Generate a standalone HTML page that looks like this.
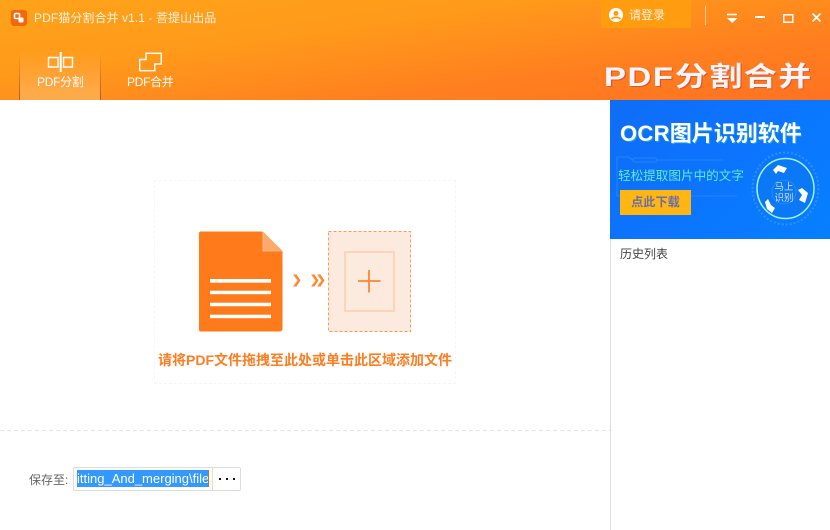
<!DOCTYPE html>
<html><head><meta charset="utf-8"><style>
*{margin:0;padding:0;box-sizing:border-box}
html,body{width:830px;height:530px;overflow:hidden;background:#fff}
body{position:relative;font-family:"Liberation Sans","Noto Sans CJK SC",sans-serif}
.a{position:absolute;white-space:nowrap}
svg{position:absolute;display:block}
</style></head><body>
<div class="a" style="left:0;top:0;width:830px;height:100px;background:linear-gradient(172deg,#ffa31a 0%,#ff9a1a 35%,#ff7f1f 70%,#ff7220 100%)"></div>
<div class="a" style="left:20px;top:50px;width:80px;height:50px;background:linear-gradient(180deg,rgba(255,176,70,0),#ffaa48 85%)"></div>
<div class="a" style="left:19px;top:55px;width:1px;height:45px;background:linear-gradient(180deg,rgba(150,70,50,0),rgba(150,70,50,.7))"></div>
<div class="a" style="left:100px;top:55px;width:1px;height:45px;background:linear-gradient(180deg,rgba(150,70,50,0),rgba(150,70,50,.7))"></div>

<div class="a" style="left:11px;top:10px;width:16px;height:16px;background:#f5660f;border-radius:3px"></div>
<svg style="left:11px;top:10px" width="16" height="16"><rect x="3.500" y="3.500" width="5" height="5" rx="1" fill="none" stroke="#fff" stroke-width="1.600"/><rect x="7.500" y="7.500" width="5" height="5" rx="1" fill="#fff"/></svg>
<div class="a" style="left:34px;top:10px;font-size:12px;line-height:16px;color:#fff3e0;letter-spacing:.08px">PDF猫分割合并 v1.1 - 菩提山出品</div>

<svg style="left:47px;top:51px" width="27" height="22"><path d="M1.500 6.500h9.500v9.500H1.500zM16.500 6.500h9v9.500h-9z" fill="none" stroke="#fff" stroke-width="1.400"/><path d="M13.700 1v20" stroke="#fff" stroke-width="2"/></svg>
<div class="a" style="left:37px;top:74px;font-size:12px;line-height:16px;color:#fff;letter-spacing:-.3px">PDF分割</div>
<svg style="left:139px;top:52px" width="24" height="20"><path d="M.700 7.500H7V1.300H22.300V12H15.700V18.700H.700z" fill="none" stroke="#fff" stroke-width="1.400"/></svg>
<div class="a" style="left:127px;top:74px;font-size:12px;line-height:16px;color:#fff;letter-spacing:-.3px">PDF合并</div>

<div class="a" style="left:601px;top:0;width:90px;height:28px;background:#ff9c10"></div>
<svg style="left:609px;top:8px" width="14" height="14"><circle cx="7" cy="7" r="7" fill="#fff"/><circle cx="7" cy="5.400" r="2.500" fill="#ff9c10"/><path d="M2.700 11.200c1-2.400 7.600-2.400 8.600 0" fill="none" stroke="#ff9c10" stroke-width="1.700"/></svg>
<div class="a" style="left:629px;top:7px;font-size:12px;line-height:16px;color:#fff3e0">请登录</div>
<div class="a" style="left:705px;top:6px;width:1px;height:19px;background:rgba(255,255,255,.55)"></div>
<svg style="left:725px;top:0" width="105" height="30"><path d="M2 14.500h10" stroke="#fff" stroke-width="1.500"/><path d="M2 18h10.500l-5.250 5z" fill="#fff"/><path d="M30 17h10" stroke="#fff" stroke-width="2"/><rect x="58.750" y="14.750" width="9" height="7.500" fill="none" stroke="#fff" stroke-width="1.500"/><path d="M87.500 13.500l8 8M95.500 13.500l-8 8" stroke="#fff" stroke-width="1.700"/></svg>

<div class="a" style="left:604px;top:59px;font-size:27px;line-height:36px;font-weight:bold;color:#f6f6fb;letter-spacing:1.300px;text-shadow:1px 1px 0 #e8542a;transform:scaleX(1.22);transform-origin:left center">PDF分割合并</div>

<!-- Drop zone -->
<div class="a" style="left:154px;top:180px;width:302px;height:204px;border:1px dashed #f9f5f5"></div>
<svg style="left:199px;top:231px" width="84" height="101"><path d="M2 .500H63L83.500 20V98a2.500 2.500 0 0 1-2.500 2.500H2A2 2 0 0 1 0 98.500V2.500A2 2 0 0 1 2 .500z" fill="#ff7a1a"/><path d="M64 .500V20H83.500z" fill="#ffaa6b"/><path d="M64 .500V20H83.500" fill="none" stroke="#ffc69c" stroke-width=".800"/><g fill="#fff"><rect x="11" y="48" width="61" height="3.700"/><rect x="11" y="59.700" width="61" height="3.500"/><rect x="11" y="71.700" width="61" height="3.500"/><rect x="11" y="83.700" width="61" height="3.500"/></g></svg>
<svg style="left:292px;top:272px" width="34" height="18"><path d="M1 2.500l4.500 6-4.500 6h3.500l4-6-4-6z" fill="#ff8a35"/><path d="M19 2.500l4.500 6-4.500 6h3.500l4-6-4-6zM25 2.500l4.500 6-4.500 6h3.500l4-6-4-6z" fill="#ff8a35"/></svg>
<svg style="left:328px;top:231px" width="83" height="101"><rect x=".500" y=".500" width="82" height="100" fill="#fdeadf" stroke="#ff9a55" stroke-dasharray="3 2"/></svg>
<div class="a" style="left:344px;top:251px;width:51px;height:61px;border:2px solid #fdd4b8"></div>
<svg style="left:358px;top:270px" width="23" height="23"><path d="M0 11h22.500M11 0v22.500" stroke="#ff8436" stroke-width="1.800"/></svg>
<div class="a" style="left:158px;top:351px;font-size:14px;line-height:18px;font-weight:bold;color:#ff7d20">请将PDF文件拖拽至此处或单击此区域添加文件</div>

<div class="a" style="left:0;top:430px;width:610px;height:1px;background:repeating-linear-gradient(90deg,#e4e4e4 0 4px,transparent 4px 7px)"></div>
<div class="a" style="left:29px;top:472px;font-size:12px;line-height:16px;color:#666">保存至:</div>
<div class="a" style="left:73px;top:467px;width:168px;height:24px;border:1px solid #ddd;border-radius:2px"></div>
<div class="a" style="left:212px;top:467px;width:1px;height:24px;background:#ddd"></div>
<div class="a" style="left:77px;top:470px;width:132px;height:17px;background:#3399ff;overflow:hidden;border-right:1px solid #d66a10;color:#fff;font-size:13px;line-height:17px">itting_And_merging\file</div>
<svg style="left:218px;top:477px" width="18" height="4"><rect x="1" y="1" width="2" height="2" fill="#111"/><rect x="8" y="1" width="2" height="2" fill="#111"/><rect x="15" y="1" width="2" height="2" fill="#111"/></svg>

<!-- Sidebar -->
<div class="a" style="left:610px;top:100px;width:1px;height:430px;background:#ddd"></div>
<div class="a" style="left:610px;top:100px;width:220px;height:139px;background:linear-gradient(135deg,#0f6df5,#0c74ff 50%,#0680ff);overflow:hidden"></div>
<div class="a" style="left:620px;top:119px;font-size:22px;line-height:29px;font-weight:bold;color:#fff;text-shadow:1px 1px 0 #1f9de8"><span style="letter-spacing:.3px">OCR</span>图片识别软件</div>
<svg style="left:610px;top:100px" width="220" height="139"><g fill="none" stroke="#3a92ff" stroke-width=".800" opacity=".75"><path d="M18 57H7v39h120M18 57l5 3M47 60h66"/><rect x="23" y="58" width="24" height="4" rx="2"/></g><ellipse cx="175.500" cy="88.500" rx="33" ry="36" fill="none" stroke="#2f8fff" stroke-width="2" stroke-dasharray="2 2"/><ellipse cx="175.500" cy="88.500" rx="28.500" ry="30" fill="#0b78f6" stroke="#9ff3ff" stroke-width="1.500"/><circle cx="174" cy="92" r="12" fill="none" stroke="#2b90f5" stroke-width=".800"/><path d="M163 70L168 65L177 68L174 73L168 71L166 74zM192 88L198 93L195 103L189 100L192 95L188 90zM155 102L158 99L161 105L165 108L162 113L157 109z" fill="#fff"/></svg>
<div class="a" style="left:618px;top:166px;font-size:12.600px;line-height:20px;color:#5fead8">轻松提取图片中的文字</div>
<div class="a" style="left:620px;top:190px;width:71px;height:25px;background:#ffb612;color:#6b6fa8;font-size:12.200px;line-height:25px;font-weight:bold;text-align:center">点此下载</div>
<div class="a" style="left:772px;top:182px;width:24px;font-size:9.500px;line-height:11px;color:#d5ddff;text-align:center;white-space:normal">马上识别</div>
<div class="a" style="left:620px;top:246px;font-size:12px;line-height:16px;color:#444">历史列表</div>
</body></html>
